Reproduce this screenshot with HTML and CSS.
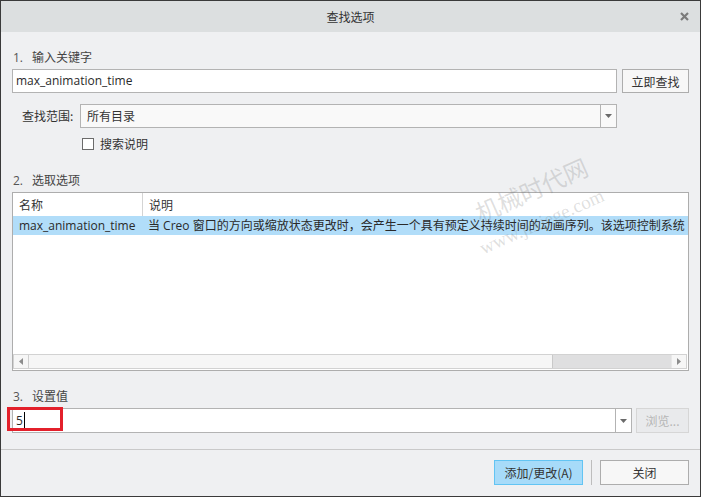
FILE: index.html
```html
<!DOCTYPE html>
<html lang="zh-CN">
<head>
<meta charset="utf-8">
<title>查找选项</title>
<link rel="stylesheet" href="styles.css">
</head>
<body>
<div class="dialog">
  <div class="titlebar">
    <span></span>
    <span class="title">查找选项</span>
    <span class="close">
      <svg width="9" height="9" viewBox="0 0 9 9"><path d="M1 1 L8 8 M8 1 L1 8" stroke="#7b7b7b" stroke-width="2.2" fill="none"/></svg>
    </span>
  </div>
  <div class="content">
    <div class="label l1"><span class="num">1.</span>输入关键字</div>
    <div class="row search-row">
      <div class="field">max_animation_time</div>
      <div class="btn find">立即查找</div>
    </div>
    <div class="row scope-row">
      <div class="scope-label">查找范围:</div>
      <div class="select">
        <span class="select-text">所有目录</span>
        <span class="arrow"><svg width="7" height="4" viewBox="0 0 7 4"><path d="M0 0 H7 L3.5 4 Z" fill="#6a6a6a"/></svg></span>
      </div>
    </div>
    <div class="row check-row">
      <span class="checkbox"></span>
      <span>搜索说明</span>
    </div>
    <div class="label l2"><span class="num">2.</span>选取选项</div>
    <div class="table">
      <div class="thead">
        <div class="c1">名称</div>
        <div class="c2">说明</div>
      </div>
      <div class="trow selected">
        <div class="c1">max_animation_time</div>
        <div class="c2">当 Creo 窗口的方向或缩放状态更改时，会产生一个具有预定义持续时间的动画序列。该选项控制系统</div>
      </div>
      <div class="fill"></div>
      <div class="hscroll">
        <div class="sbtn"><svg width="4" height="7" viewBox="0 0 4 7"><path d="M4 0 V7 L0 3.5 Z" fill="#8c8c8c"/></svg></div>
        <div class="thumb"></div>
        <div class="track"></div>
        <div class="sbtn right"><svg width="4" height="7" viewBox="0 0 4 7"><path d="M0 0 V7 L4 3.5 Z" fill="#8c8c8c"/></svg></div>
      </div>
    </div>
    <div class="label l3"><span class="num">3.</span>设置值</div>
    <div class="row value-row">
      <div class="combo">
        <span class="value">5<span class="caret"></span></span>
        <span class="arrow2"><svg width="7" height="4" viewBox="0 0 7 4"><path d="M0 0 H7 L3.5 4 Z" fill="#6a6a6a"/></svg></span>
        <div class="highlight"></div>
      </div>
      <div class="btn browse">浏览...</div>
    </div>
  </div>
  <div class="footer">
    <div class="btn primary">添加/更改(A)</div>
    <div class="vsep"></div>
    <div class="btn close-btn">关闭</div>
  </div>
  <span class="wm wm1">机械时代网</span>
  <span class="wm wm2">www.jixiege.com</span>
</div>
</body>
</html>
```
FILE: styles.css
```css
html, body {
  margin: 0;
  padding: 0;
  background: #eff0f2;
}

.dialog {
  width: 701px;
  height: 497px;
  box-sizing: border-box;
  border: 1px solid #3a3a3a;
  background: #eff0f2;
  display: flex;
  flex-direction: column;
  position: relative;
  overflow: hidden;
  font-family: "Open Sans", "Noto Sans CJK SC", sans-serif;
  font-size: 12px;
  color: #333;
}

.titlebar {
  height: 31px;
  flex: none;
  background: #dcdfe0;
  display: grid;
  grid-template-columns: 1fr auto 1fr;
  align-items: center;
}

.title {
  font-family: "Noto Sans CJK SC", sans-serif;
  font-size: 12px;
  color: #333;
}

.close {
  justify-self: end;
  margin-right: 11px;
  display: flex;
  margin-top: -1px;
}

.content {
  padding: 0 11px;
  flex: none;
}

.label {
  height: 16px;
  line-height: 16px;
  color: #444;
  font-family: "Noto Sans CJK SC", sans-serif;
}

.label .num {
  font-family: "Open Sans", sans-serif;
  margin-left: 1px;
  margin-right: 9px;
  color: #555;
}

.l1 { margin-top: 17px; }
.l2 { margin-top: 22px; }
.l3 { margin-top: 17px; }

.row {
  display: flex;
}

.search-row {
  margin-top: 4px;
  height: 24px;
  gap: 5px;
}

.field {
  flex: 1;
  box-sizing: border-box;
  border: 1px solid #b3b3b3;
  background: #fff;
  padding-left: 3px;
  line-height: 22px;
  font-size: 12px;
  color: #2a2a2a;
}

.btn {
  box-sizing: border-box;
  border: 1px solid #adadad;
  background: #f7f7f7;
  display: flex;
  align-items: center;
  justify-content: center;
  color: #333;
  font-family: "Noto Sans CJK SC", sans-serif;
}

.find {
  width: 67px;
}

.scope-row {
  margin-top: 11px;
  height: 24px;
}

.scope-label {
  width: 68px;
  box-sizing: border-box;
  padding-left: 10px;
  line-height: 24px;
  font-family: "Noto Sans CJK SC", sans-serif;
}

.select {
  width: 537px;
  box-sizing: border-box;
  border: 1px solid #b3b3b3;
  background: #f9f9f9;
  display: flex;
}

.select-text {
  flex: 1;
  padding-left: 6px;
  line-height: 22px;
  font-family: "Noto Sans CJK SC", sans-serif;
}

.arrow, .arrow2 {
  width: 15px;
  border-left: 1px solid #b3b3b3;
  display: flex;
  align-items: center;
  justify-content: center;
}

.check-row {
  margin-top: 9px;
  height: 13px;
  align-items: center;
  padding-left: 70px;
  gap: 6px;
  font-family: "Noto Sans CJK SC", sans-serif;
}

.checkbox {
  width: 12px;
  height: 12px;
  box-sizing: border-box;
  border: 1px solid #6b6b6b;
  background: #fff;
}

.table {
  margin-top: 4px;
  height: 179px;
  box-sizing: border-box;
  border: 1px solid #adadad;
  background: #fff;
  display: flex;
  flex-direction: column;
  overflow: hidden;
}

.thead {
  height: 23px;
  flex: none;
  display: flex;
  line-height: 23px;
  font-family: "Noto Sans CJK SC", sans-serif;
}

.thead .c1 {
  width: 130px;
  box-sizing: border-box;
  flex: none;
  padding-left: 6px;
  border-right: 1px solid #d4d4d4;
}

.thead .c2 {
  padding-left: 6px;
}

.trow {
  height: 19px;
  flex: none;
  display: flex;
  line-height: 19px;
  white-space: nowrap;
  overflow: hidden;
}

.trow.selected {
  background: #b1ddf9;
}

.trow .c1 {
  width: 130px;
  flex: none;
  padding-left: 6px;
  box-sizing: border-box;
  font-size: 12px;
  color: #2a2a2a;
  overflow: hidden;
}

.trow .c2 {
  padding-left: 5px;
  color: #2a2a2a;
}

.fill {
  flex: 1;
}

.hscroll {
  height: 15px;
  flex: none;
  margin: 0 1px 1px 0;
  box-sizing: border-box;
  border: 1px solid #d2d2d2;
  background: #dfdfe0;
  display: flex;
}

.sbtn {
  width: 14px;
  background: #f6f6f6;
  border-right: 1px solid #cfcfcf;
  display: flex;
  align-items: center;
  justify-content: center;
}

.sbtn.right {
  border-right: none;
  border-left: 1px solid #e8e8e8;
}

.thumb {
  width: 523px;
  background: #f6f6f6;
  border-right: 1px solid #c9c9c9;
}

.track {
  flex: 1;
}

.value-row {
  margin-top: 4px;
  height: 25px;
  gap: 4px;
}

.combo {
  width: 620px;
  box-sizing: border-box;
  border: 1px solid #b3b3b3;
  background: #fff;
  display: flex;
  position: relative;
}

.value {
  flex: 1;
  padding-left: 3px;
  line-height: 23px;
  font-size: 12px;
  color: #2a2a2a;
  display: flex;
  align-items: center;
}

.caret {
  display: inline-block;
  width: 1px;
  height: 17px;
  background: #000;
  margin-left: 1px;
}

.highlight {
  position: absolute;
  left: -6px;
  top: -2px;
  width: 56px;
  height: 24px;
  box-sizing: border-box;
  border: 3px solid #e3202b;
}

.browse {
  width: 53px;
  background: #e9eaec;
  border-color: #d6d6d6;
  color: #b6b6b6;
}

.footer {
  margin-top: 16px;
  flex: 1;
  border-top: 1px solid #c9c9c9;
  display: flex;
  justify-content: flex-end;
  align-items: flex-start;
  padding: 10px 11px 0 0;
  gap: 8px;
}

.footer .btn {
  width: 89px;
  height: 25px;
}

.primary {
  background: #a7dbf9;
  border-color: #62c4f3;
}

.vsep {
  width: 1px;
  height: 25px;
  background: #bdbdbd;
}

.wm {
  position: absolute;
  transform: translate(-50%, -50%) rotate(-24deg);
  white-space: nowrap;
  color: rgba(110, 110, 110, 0.22);
  pointer-events: none;
}

.wm1 {
  left: 530px;
  top: 188px;
  font-family: "Noto Sans CJK SC", serif;
  font-size: 24px;
}

.wm2 {
  left: 541px;
  top: 221px;
  font-family: "Liberation Serif", serif;
  font-size: 19px;
}
```
